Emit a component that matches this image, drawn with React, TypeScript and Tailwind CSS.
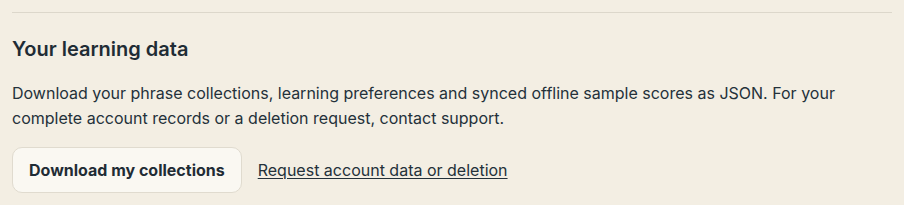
export default function App() {
  return (
    <div className="min-h-[205px] w-full bg-[#f3eee3] px-3 pt-3 text-[#24313a]" style={{ fontFamily: "Inter, 'Noto Sans', sans-serif" }}>
      <div className="border-t border-[#dcd7cb] pt-[23px]">
        <h2 className="text-[20px] font-semibold leading-[26px] text-[#1f2c35]">Your learning data</h2>
        <p className="mt-[19px] max-w-[860px] text-[16px] leading-[25px]">
          Download your phrase collections, learning preferences and synced offline sample scores as JSON. For your complete account records or a deletion request, contact support.
        </p>
        <div className="mt-[16px] flex items-center gap-4">
          <button className="h-[46px] rounded-[10px] border border-[#e0dbcf] bg-[#faf8f2] px-4 text-[16px] font-bold text-[#1f2c35]">
            Download my collections
          </button>
          <a href="#" className="text-[16px] underline underline-offset-2 text-[#24313a]">Request account data or deletion</a>
        </div>
      </div>
    </div>
  );
}
